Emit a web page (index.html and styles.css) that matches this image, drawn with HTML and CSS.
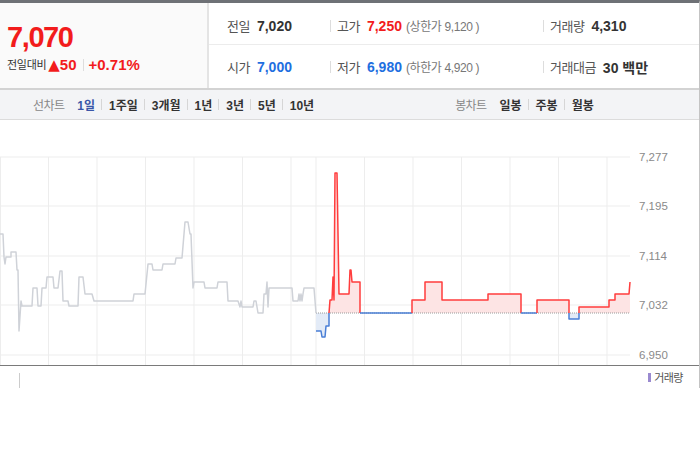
FILE: index.html
```html
<!DOCTYPE html>
<html lang="ko">
<head>
  <meta charset="UTF-8">
  <meta name="viewport" content="width=device-width, initial-scale=1.0">
  <title>시세</title>
  <link rel="stylesheet" href="styles.css">
</head>
<body>
  <div class="stock">
    <div class="quote">
      <div class="now">
        <div class="price up">7,070</div>
        <div class="change">
          <span class="change-label">전일대비</span>
          <span class="up bold"><span class="tri">▲</span>50</span>
          <span class="bar"></span>
          <span class="up bold">+0.71%</span>
        </div>
      </div>
      <div class="info">
        <div class="cell first"><span class="lbl">전일</span><span class="val">7,020</span></div>
        <div class="cell"><span class="lbl">고가</span><span class="val up">7,250</span><span class="limit">(상한가 9,120 )</span></div>
        <div class="cell"><span class="lbl">거래량</span><span class="val">4,310</span></div>
        <div class="cell first"><span class="lbl">시가</span><span class="val down">7,000</span></div>
        <div class="cell"><span class="lbl">저가</span><span class="val down">6,980</span><span class="limit">(하한가 4,920 )</span></div>
        <div class="cell"><span class="lbl">거래대금</span><span class="val">30 백만</span></div>
      </div>
    </div>

    <div class="tabs">
      <div class="tab-group">
        <span class="tab-title">선차트</span>
        <a class="tab on">1일</a><i></i>
        <a class="tab">1주일</a><i></i>
        <a class="tab">3개월</a><i></i>
        <a class="tab">1년</a><i></i>
        <a class="tab">3년</a><i></i>
        <a class="tab">5년</a><i></i>
        <a class="tab">10년</a>
      </div>
      <div class="tab-group">
        <span class="tab-title">봉차트</span>
        <a class="tab">일봉</a><i></i>
        <a class="tab">주봉</a><i></i>
        <a class="tab">월봉</a>
      </div>
    </div>

    <div class="chart">
      <svg width="699" height="245" viewBox="0 120 699 245">
        <g class="grid">
          <line x1="0" y1="157" x2="630" y2="157"/>
          <line x1="0" y1="206" x2="630" y2="206"/>
          <line x1="0" y1="256" x2="630" y2="256"/>
          <line x1="0" y1="305" x2="630" y2="305"/>
          <line x1="0" y1="355" x2="630" y2="355"/>
          <line x1="0.5" y1="157" x2="0.5" y2="365"/>
          <line x1="48.5" y1="157" x2="48.5" y2="365"/>
          <line x1="97" y1="157" x2="97" y2="365"/>
          <line x1="145.5" y1="157" x2="145.5" y2="365"/>
          <line x1="194" y1="157" x2="194" y2="365"/>
          <line x1="242.5" y1="157" x2="242.5" y2="365"/>
          <line x1="291" y1="157" x2="291" y2="365"/>
          <line x1="316" y1="157" x2="316" y2="365"/>
          <line x1="364.5" y1="157" x2="364.5" y2="365"/>
          <line x1="413" y1="157" x2="413" y2="365"/>
          <line x1="461.5" y1="157" x2="461.5" y2="365"/>
          <line x1="510" y1="157" x2="510" y2="365"/>
          <line x1="558.5" y1="157" x2="558.5" y2="365"/>
          <line x1="607" y1="157" x2="607" y2="365"/>
        </g>
        <g class="axis-y">
          <text x="639" y="161">7,277</text>
          <text x="639" y="210">7,195</text>
          <text x="639" y="260">7,114</text>
          <text x="639" y="309">7,032</text>
          <text x="639" y="359">6,950</text>
        </g>

        <!-- 오늘 등락 영역 -->
        <polygon class="fill-down" points="316,313 316,331 321,331 322,337 325,337 326,326 329,326 329,313"/>
        <polygon class="fill-down" points="569,313 569,319 579,319 579,313"/>
        <polygon class="fill-up" points="329,313 330,300 332,300 333,277 334,300 335,173 337,173 339,294 349,294 350,270 351,270 352,282 360,282 360,313"/>
        <polygon class="fill-up" points="412,313 412,300 425,300 425,282 442,282 442,300 488,300 488,294 521,294 521,313"/>
        <polygon class="fill-up" points="537,313 537,300 569,300 569,313"/>
        <polygon class="fill-up" points="579,313 579,307 609,307 609,300 615,300 615,294 629,294 630,282 630,313"/>

        <line class="base" x1="316" y1="313" x2="630" y2="313"/>

        <!-- 전일 -->
        <polyline class="prev" points="0,234 3,234 4,257 5,264 6,257 11,257 11,252 16,252 17,270 18,270 19,331 21,301 22,306 32,306 33,288 37,288 38,306 41,306 42,288 46,288 47,277 53,277 54,288 58,288 60,271 62,271 63,301 68,301 69,306 78,306 79,277 83,277 85,294 92,294 94,301 133,301 134,294 145,294 148,264 152,264 153,270 162,270 163,264 175,264 176,258 182,258 185,222 188,222 190,234 191,234 193,288 194,282 204,282 205,288 217,288 218,282 227,282 228,301 238,301 240,307 241,301 242,307 253,307 254,301 256,301 258,313 263,313 264,294 266,294 267,282 268,307 269,288 292,288 293,301 298,301 299,294 300,301 301,294 302,301 303,294 304,288 314,288 316,313"/>

        <!-- 오늘 -->
        <polyline class="down-line" points="316,331 321,331 322,337 325,337 326,326 329,326 329,313"/>
        <polyline class="up-line" points="329,313 330,300 332,300 333,277 334,300 335,173 337,173 339,294 349,294 350,270 351,270 352,282 360,282 360,313"/>
        <polyline class="down-line" points="360,313 412,313"/>
        <polyline class="up-line" points="412,313 412,300 425,300 425,282 442,282 442,300 488,300 488,294 521,294 521,313"/>
        <polyline class="down-line" points="521,313 537,313"/>
        <polyline class="up-line" points="537,313 537,300 569,300 569,313"/>
        <polyline class="down-line" points="569,313 569,319 579,319 579,313"/>
        <polyline class="up-line" points="579,313 579,307 609,307 609,300 615,300 615,294 629,294 630,282"/>
      </svg>
    </div>

    <div class="volume">
      <span class="vol-tick"></span>
      <span class="legend"><i></i>거래량</span>
    </div>
  </div>
</body>
</html>
```

FILE: styles.css
```css
body {
  margin: 0;
  padding: 0;
  background-color: #fff;
  font-family: 'Liberation Sans', 'Noto Sans CJK KR', sans-serif;
  color: #333;
}
.stock {
  border-top: 3px solid #6e7176;
  border-right: 1px solid #c4c4c4;
}
.up {
  color: #f21c1c;
}
.down {
  color: #1f6fe0;
}
.bold {
  font-weight: bold;
}

/* 현재가 영역 */
.quote {
  display: flex;
  height: 85px;
  border-bottom: 2px solid #d3d3d3;
}
.now {
  width: 200px;
  padding-left: 7px;
  background-color: #fafafa;
  border-right: 2px solid #e4e4e4;
}
.price {
  margin-top: 17px;
  font-size: 29px;
  font-weight: bold;
  letter-spacing: -1.4px;
  line-height: 34px;
}
.change {
  display: flex;
  align-items: center;
  margin-top: 2px;
  font-size: 15px;
  line-height: 18px;
}
.change-label {
  font-size: 11px;
  color: #333;
  margin-right: 2px;
  letter-spacing: -0.3px;
}
.tri {
  font-family: 'DejaVu Sans', sans-serif;
  font-size: 15px;
  margin-right: 0;
}
.change .bar {
  width: 1px;
  height: 12px;
  background-color: #ddd;
  margin: 0 5px 0 6px;
}
.info {
  flex: 1;
  display: grid;
  grid-template-columns: 121px 213px 1fr;
  grid-template-rows: 42px 42px;
}
.info .cell {
  display: flex;
  align-items: center;
  font-size: 13px;
  border-bottom: 1px solid #ececec;
}
.info .cell:nth-child(-n+3) {
  padding-top: 4px;
}
.info .cell:nth-child(n+4) {
  border-bottom: 0;
  height: 43px;
}
.info .cell.first {
  padding-left: 18px;
}
.info .cell:not(.first)::before {
  content: '';
  width: 1px;
  height: 12px;
  background-color: #ddd;
  margin-right: 6px;
}
.lbl {
  color: #555;
  margin-right: 7px;
  letter-spacing: -0.5px;
}
.val {
  font-size: 14px;
  font-weight: bold;
}
.limit {
  margin-left: 4px;
  font-size: 12px;
  color: #777;
  letter-spacing: -0.4px;
}

/* 차트 탭 */
.tabs {
  display: flex;
  gap: 141px;
  height: 29px;
  padding-left: 33px;
  background-color: #f3f4f6;
  border-bottom: 1px solid #dcdcdc;
}
.tab-group {
  display: flex;
  align-items: center;
  font-size: 12px;
}
.tab-title {
  color: #888;
  margin-right: 13px;
  letter-spacing: -0.6px;
}
.tab {
  color: #333;
  font-weight: bold;
}
.tab.on {
  color: #3a56a8;
}
.tab-group i {
  width: 1px;
  height: 11px;
  background-color: #d6d6d6;
  margin: 0 7px 0 6px;
}

/* 차트 */
.chart {
  height: 245px;
  border-bottom: 1px solid #7a7a7a;
}
.chart svg {
  display: block;
}
.grid line {
  stroke: #ededed;
  stroke-width: 1;
}
.axis-y text {
  font-family: 'Liberation Sans', sans-serif;
  font-size: 11.5px;
  fill: #8a8a8a;
}
.fill-up {
  fill: #fde4e4;
}
.fill-down {
  fill: #e3ebf7;
}
.base {
  stroke: #9a9a9a;
  stroke-width: 1;
  stroke-dasharray: 1 1;
}
.prev,
.up-line,
.down-line {
  fill: none;
  stroke-width: 1.5;
  stroke-linejoin: round;
}
.prev {
  stroke: #cfd2d8;
}
.up-line {
  stroke: #ff3d3d;
}
.down-line {
  stroke: #4a7fd6;
}

/* 거래량 */
.volume {
  display: flex;
  justify-content: space-between;
  height: 22px;
}
.vol-tick {
  width: 1px;
  height: 15px;
  margin: 7px 0 0 19px;
  background-color: #ccc;
}
.legend {
  display: flex;
  align-items: center;
  height: 22px;
  margin-right: 16px;
  font-size: 11px;
  color: #555;
  letter-spacing: -0.5px;
}
.legend i {
  width: 3px;
  height: 9px;
  background-color: #9a8ad0;
  margin-right: 3px;
}
```
